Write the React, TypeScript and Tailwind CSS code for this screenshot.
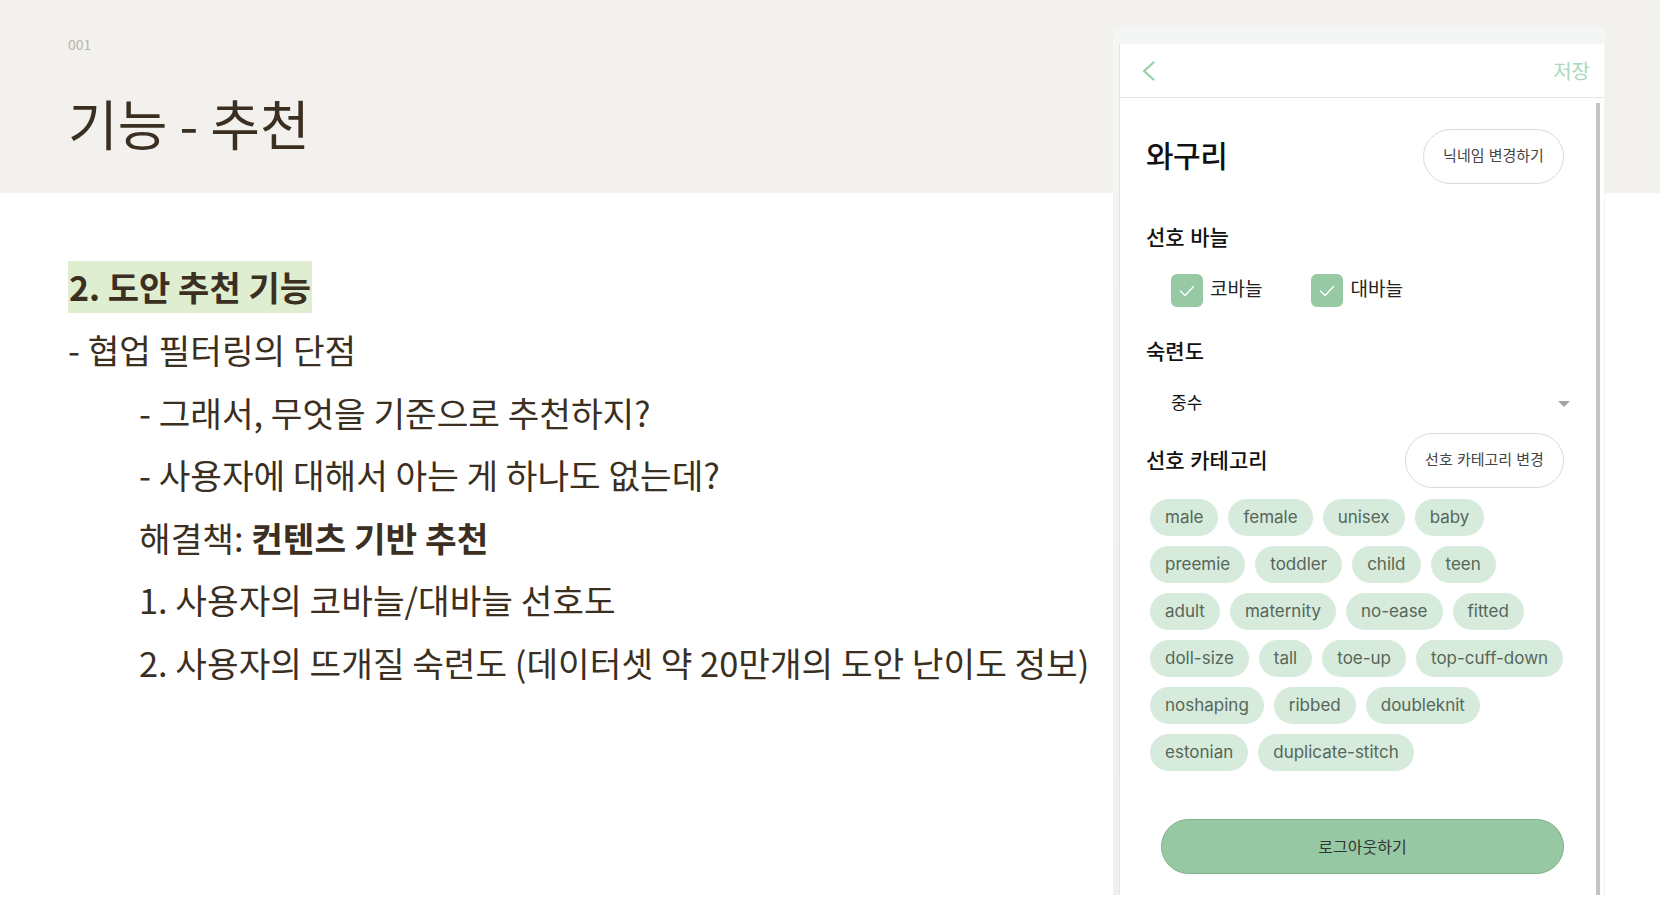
import React from 'react';

const chipRows: string[][] = [
  ['male', 'female', 'unisex', 'baby'],
  ['preemie', 'toddler', 'child', 'teen'],
  ['adult', 'maternity', 'no-ease', 'fitted'],
  ['doll-size', 'tall', 'toe-up', 'top-cuff-down'],
  ['noshaping', 'ribbed', 'doubleknit'],
  ['estonian', 'duplicate-stitch'],
];

const CheckBox = ({ label }: { label: string }) => (
  <div className="flex items-center gap-[7px]">
    <div className="w-[32px] h-[33px] rounded-[6px] bg-[#96c9a4] flex items-center justify-center">
      <svg width="16" height="12" viewBox="0 0 16 12" fill="none">
        <polyline points="1.5,6 6,10.5 14.5,1.5" stroke="#ffffff" strokeWidth="1.4" strokeLinecap="round" strokeLinejoin="round" />
      </svg>
    </div>
    <span className="text-[19px] text-[#222]">{label}</span>
  </div>
);

const PhoneScreen = () => (
  // pasted app screenshot sitting over the slide
  <div className="absolute left-[1113px] top-[27px] w-[492px] h-[868px] pl-[6px] pt-[17px] pr-[1px] bg-gradient-to-b from-[#f4f5f5] to-[#eef0f0]">
    <div className="h-full bg-white border-l border-[#e4e4e4] flex flex-col font-['Inter','Noto_Sans_CJK_KR',sans-serif]">
      {/* top bar */}
      <div className="h-[54px] shrink-0 border-b border-[#e6e6e6] flex items-center justify-between pl-[22px] pr-[14px]">
        <svg width="13" height="20" viewBox="0 0 13 20" fill="none">
          <polyline points="11.5,1.5 2,10 11.5,18.5" stroke="#94cfa8" strokeWidth="2.2" strokeLinecap="round" strokeLinejoin="round" />
        </svg>
        <span className="text-[20px] text-[#a9d9b9] pt-[2px]">저장</span>
      </div>

      <div className="flex-1 flex min-h-0">
        <div className="flex-1 flex flex-col pl-[26px] pr-[4px]">
          <div className="mt-[31px] flex items-center justify-between w-[418px]">
            <span className="text-[30px] font-medium text-[#111] tracking-[-0.5px]">와구리</span>
            <button className="h-[55px] w-[141px] rounded-full border-[1.5px] border-[#dadada] text-[15px] text-[#444]">
              닉네임 변경하기
            </button>
          </div>

          <div className="mt-[39px] h-[30px] leading-[30px] text-[21px] font-medium text-[#111]">선호 바늘</div>

          <div className="mt-[21px] flex items-center gap-[49px] pl-[25px]">
            <CheckBox label="코바늘" />
            <CheckBox label="대바늘" />
          </div>

          <div className="mt-[30px] h-[30px] leading-[30px] text-[21px] font-medium text-[#111]">숙련도</div>

          <div className="mt-[22px] h-[30px] flex items-center justify-between pl-[25px] w-[424px]">
            <span className="text-[17px] text-[#111]">중수</span>
            <svg width="12" height="6" viewBox="0 0 12 6">
              <polygon points="0,0 12,0 6,6" fill="#a3a3a3" />
            </svg>
          </div>

          <div className="mt-[14px] flex items-center justify-between w-[418px]">
            <span className="text-[21px] font-medium text-[#111]">선호 카테고리</span>
            <button className="h-[55px] w-[159px] rounded-full border-[1.5px] border-[#dadada] text-[15px] text-[#444]">
              선호 카테고리 변경
            </button>
          </div>

          <div className="mt-[11px] flex flex-col gap-[10px] pl-[4px]">
            {chipRows.map((row, i) => (
              <div key={i} className="flex gap-[10px]">
                {row.map((c) => (
                  <span key={c} className="h-[37px] px-[15px] rounded-full bg-[#d6ebdc] text-[17px] leading-[37px] text-[#566659]">
                    {c}
                  </span>
                ))}
              </div>
            ))}
          </div>

          <button className="mt-[48px] ml-[15px] h-[55px] w-[403px] rounded-full bg-[#96c8a4] border border-[#7fb28d] text-[16px] text-[#333]">
            로그아웃하기
          </button>
        </div>
        {/* scrollbar */}
        <div className="w-[4px] mt-[5px] mr-[4px] bg-[#c4c4c4]" />
      </div>
    </div>
  </div>
);

export default function App() {
  return (
    <div className="relative w-[1660px] h-[920px] overflow-hidden bg-white text-[#3b2f22] font-['Noto_Sans_CJK_KR',sans-serif]">
      <div className="h-[193px] bg-[#f2f1ed] pl-[68px] pt-[36px] flex flex-col">
        <span className="text-[14px] leading-[16px] text-[#b9b4ae]">001</span>
        <h1 className="mt-[39px] text-[54px] leading-[64px] font-normal">기능 - 추천</h1>
      </div>

      <div className="pl-[68px] flex flex-col">
        <div className="mt-[68px] self-start h-[52px] leading-[52px] px-[1px] bg-[#dfedd0] text-[34px] font-bold">
          2. 도안 추천 기능
        </div>
        <div className="mt-[5px] flex flex-col text-[34.4px] leading-[62.5px]">
          <div>- 협업 필터링의 단점</div>
          <div className="pl-[71px]">- 그래서, 무엇을 기준으로 추천하지?</div>
          <div className="pl-[71px]">- 사용자에 대해서 아는 게 하나도 없는데?</div>
          <div className="pl-[71px]">
            해결책: <span className="font-bold">컨텐츠 기반 추천</span>
          </div>
          <div className="pl-[71px]">1. 사용자의 코바늘/대바늘 선호도</div>
          <div className="pl-[71px]">2. 사용자의 뜨개질 숙련도 (데이터셋 약 20만개의 도안 난이도 정보)</div>
        </div>
      </div>

      <PhoneScreen />
    </div>
  );
}
